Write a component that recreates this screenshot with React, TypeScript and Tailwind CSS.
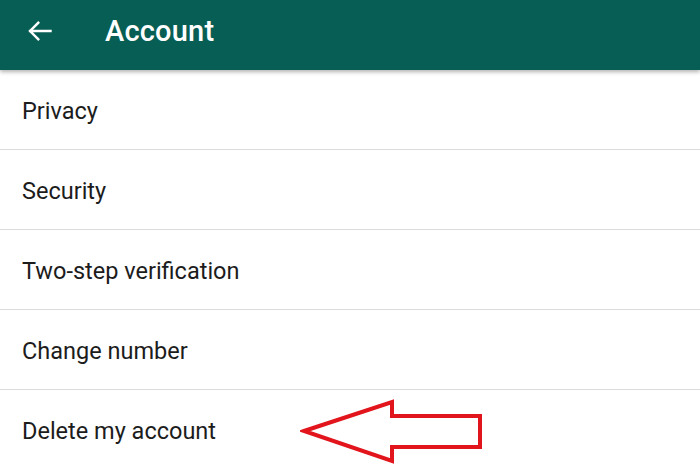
const items = [
  "Privacy",
  "Security",
  "Two-step verification",
  "Change number",
  "Delete my account",
];

const BackArrow = () => (
  <svg width="28" height="28" viewBox="0 0 24 24" fill="none">
    <path
      d="M21 12H3.5M10.5 5L3.5 12l7 7"
      stroke="white"
      strokeWidth="2.1"
      strokeLinecap="square"
    />
  </svg>
);

const RedArrow = () => (
  <svg width="190" height="66" viewBox="0 0 190 66" className="absolute left-[300px] top-[399px]">
    <path
      d="M4 32 L92 3 L92 17 L180 17 L180 48 L92 48 L92 62 Z"
      fill="none"
      stroke="#e2141c"
      strokeWidth="4"
      strokeLinejoin="miter"
    />
  </svg>
);

export default function App() {
  return (
    <div
      className="relative w-[700px] h-[467px] overflow-hidden bg-white"
      style={{ fontFamily: "Roboto, 'Liberation Sans', sans-serif" }}
    >
      <header className="relative z-10 h-[70px] bg-[#075e54] flex items-center shadow-[0_2px_4px_rgba(0,0,0,0.3)]">
        <div className="w-[105px] pl-[26px] flex items-center -mt-[8px]">
          <BackArrow />
        </div>
        <h1 className="text-[29px] font-medium text-white tracking-[0.2px] -mt-[7px]">Account</h1>
      </header>

      <ul>
        {items.map((label, i) => (
          <li
            key={label}
            className={`h-[80px] flex items-center pl-[22px] pt-[4px] text-[23.5px] text-[#1c1c1c] ${
              i < items.length - 1 ? "border-b border-[#dcdcdc]" : ""
            }`}
          >
            <span>{label}</span>
          </li>
        ))}
      </ul>

      <RedArrow />
    </div>
  );
}
